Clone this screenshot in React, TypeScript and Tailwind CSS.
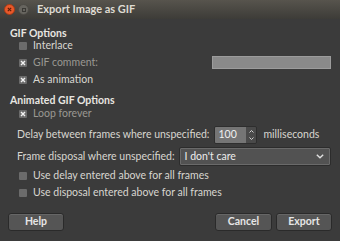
import React from 'react';

const Check = ({ checked }: { checked?: boolean }) => (
    <span className="w-[8px] h-[8px] rounded-[1px] bg-[#6b6b6b] flex items-center justify-center shrink-0">
        {checked && (
            <svg width="6" height="6" viewBox="0 0 6 6">
                <path d="M1 1L5 5M5 1L1 5" stroke="#f2f2f2" strokeWidth="1.4" />
            </svg>
        )}
    </span>
);

const CheckRow = ({ label, checked, className = '' }: { label: string; checked?: boolean; className?: string }) => (
    <div className={`flex items-center gap-[6px] ${className}`}>
        <Check checked={checked} />
        <span>{label}</span>
    </div>
);

const Btn = ({ label, className = '' }: { label: string; className?: string }) => (
    <button className={`h-[18px] rounded-[3px] border border-[#2a2a2a] bg-[#555555] text-[#e6e6e6] font-bold shadow-[inset_0_1px_0_#666] ${className}`}>
        {label}
    </button>
);

export default function App() {
    return (
        <div className="w-[340px] h-[241px] bg-[#3b3b3b] text-[#d8d6d0] text-[10.5px] flex flex-col overflow-hidden" style={{ fontFamily: 'Lato, "Open Sans", sans-serif' }}>
            {/* Title bar */}
            <div className="h-[19px] bg-gradient-to-b from-[#57544d] to-[#3d3c38] flex items-center pl-[4px] gap-[3px]">
                <span className="w-[11px] h-[11px] rounded-full bg-[#e9592a] flex items-center justify-center border border-[#a63b17]">
                    <svg width="5" height="5" viewBox="0 0 5 5">
                        <path d="M0.8 0.8L4.2 4.2M4.2 0.8L0.8 4.2" stroke="#5b1c08" strokeWidth="1.1" />
                    </svg>
                </span>
                <span className="w-[11px] h-[11px] rounded-full bg-[#67655f] flex items-center justify-center border border-[#4c4a45]">
                    <span className="w-[4px] h-[4px] border border-[#3a3935]" />
                </span>
                <span className="ml-[5px] font-bold text-[#dfdbd2] text-[11px]">Export Image as GIF</span>
            </div>

            {/* Content */}
            <div className="flex flex-col px-[10px] pt-[8px]">
                <div className="font-bold text-[#e8e6e1] leading-[12px]">GIF Options</div>
                <CheckRow label="Interlace" className="ml-[9px] mt-[1px] h-[12px]" />
                <div className="flex items-center justify-between ml-[9px] mt-[4px]">
                    <div className="flex items-center gap-[6px] h-[12px] text-[#9a9892]">
                        <Check checked />
                        <span>GIF comment:</span>
                    </div>
                    <div className="w-[119px] h-[13px] bg-[#8a8a8a] border border-[#9c9c9c] mr-[-1px]" />
                </div>
                <CheckRow label="As animation" checked className="ml-[9px] mt-[5px] h-[12px]" />

                <div className="font-bold text-[#e8e6e1] leading-[12px] mt-[8px]">Animated GIF Options</div>
                <div className="flex items-center gap-[6px] ml-[9px] mt-[2px] h-[12px] text-[#9a9892]">
                    <Check checked />
                    <span>Loop forever</span>
                </div>

                <div className="flex items-center ml-[7px] mt-[6px] h-[18px]">
                    <span>Delay between frames where unspecified:</span>
                    <div className="ml-[5px] flex h-[18px] border border-[#2e2e2e] rounded-[2px] overflow-hidden">
                        <div className="w-[31px] bg-[#757575] text-[#f0f0f0] pl-[3px] flex items-center">100</div>
                        <div className="w-[10px] bg-[#4a4a4a] flex flex-col items-center justify-center gap-[4px]">
                            <svg width="5" height="3" viewBox="0 0 5 3"><path d="M0.5 2.5L2.5 0.5L4.5 2.5" stroke="#cfcfcf" fill="none" /></svg>
                            <svg width="5" height="3" viewBox="0 0 5 3"><path d="M0.5 0.5L2.5 2.5L4.5 0.5" stroke="#cfcfcf" fill="none" /></svg>
                        </div>
                    </div>
                    <span className="ml-[6px]">milliseconds</span>
                </div>

                <div className="flex items-center ml-[7px] mt-[3px] h-[19px]">
                    <span>Frame disposal where unspecified:</span>
                    <div className="ml-[4px] flex-1 h-[19px] mr-[-1px] border border-[#2c2c2c] rounded-[2px] bg-[#525252] shadow-[inset_0_0_0_1px_#6a6a6a] flex items-center justify-between pl-[5px] pr-[6px] text-[#ececec]">
                        <span>I don't care</span>
                        <svg width="8" height="5" viewBox="0 0 8 5"><path d="M0.8 0.8L4 3.8L7.2 0.8" stroke="#e0e0e0" strokeWidth="1.4" fill="none" /></svg>
                    </div>
                </div>

                <CheckRow label="Use delay entered above for all frames" className="ml-[9px] mt-[4px] h-[12px]" />
                <CheckRow label="Use disposal entered above for all frames" className="ml-[9px] mt-[5px] h-[12px]" />
            </div>

            <div className="flex items-center px-[8px] mt-auto mb-[10px]">
                <Btn label="Help" className="w-[56px]" />
                <div className="flex-1" />
                <Btn label="Cancel" className="w-[57px]" />
                <Btn label="Export" className="w-[56px] ml-[4px]" />
            </div>
        </div>
    );
}
